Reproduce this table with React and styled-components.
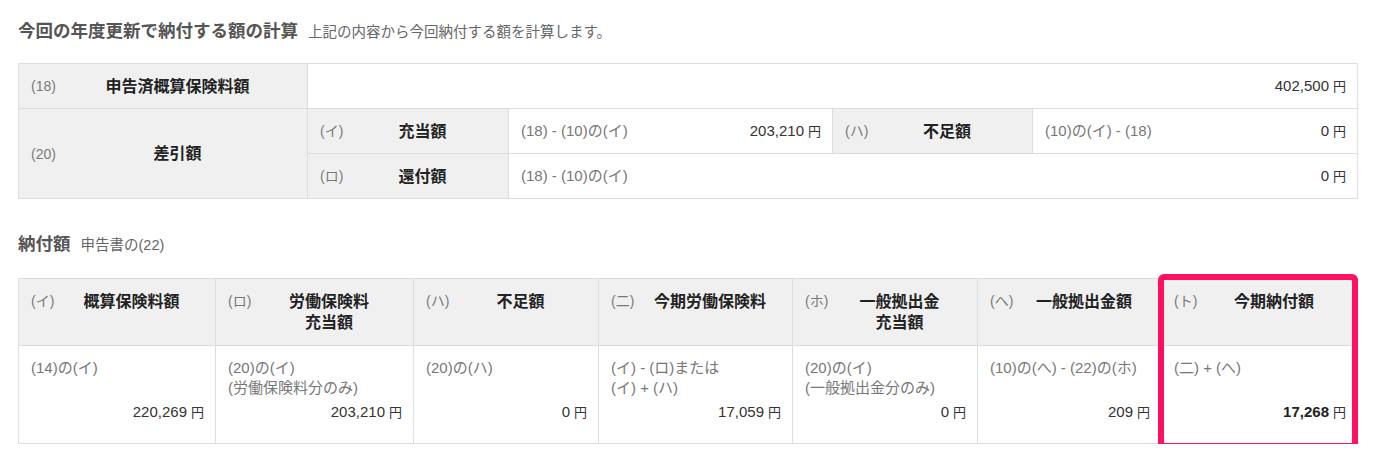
import React from "react";
import styled, { createGlobalStyle } from "styled-components";

const GlobalStyle = createGlobalStyle`
  body {
    margin: 0;
    background: #fff;
    font-family: "Liberation Sans", "Noto Sans CJK JP", sans-serif;
    color: #333;
  }
`;

const Page = styled.div`
  padding: 17px 17px 0 18px;
`;

const Heading = styled.div`
  display: flex;
  align-items: baseline;
  gap: 10px;
  height: 26px;
  margin-bottom: ${(p) => p.$gap}px;
`;

const HeadingMain = styled.span`
  font-size: 17.5px;
  font-weight: bold;
  color: #555;
`;

const HeadingSub = styled.span`
  font-size: 14.5px;
  color: #666;
`;

const Table = styled.table`
  width: 1339px;
  border-collapse: collapse;
  table-layout: fixed;
  font-size: 14px;
  line-height: 20px;
`;

const Cell = styled.td`
  border: 1px solid #ddd;
  padding: 12px 11px 12px 12px;
  background: ${(p) => (p.$head ? "#f0f0f0" : "#fff")};
  vertical-align: ${(p) => (p.$top ? "top" : "middle")};
`;

const LabelBox = styled.div`
  display: flex;
  align-items: ${(p) => (p.$top ? "flex-start" : "center")};
  height: ${(p) => (p.$top ? "42px" : "20px")};
`;

const Num = styled.span`
  flex: 0 0 28px;
  color: #7a7a7a;
  line-height: 20px;
`;

const Label = styled.span`
  flex: 1;
  text-align: center;
  font-weight: bold;
  font-size: 16px;
  color: #222;
  line-height: 21px;
`;

const ValueRow = styled.div`
  display: flex;
  justify-content: space-between;
  align-items: center;
  height: 20px;
`;

const Formula = styled.span`
  color: #777;
  font-size: 15px;
`;

const Amount = styled.span`
  color: ${(p) => (p.$strong ? "#222" : "#333")};
  font-weight: ${(p) => (p.$strong ? "bold" : "normal")};
  font-size: 15px;
  white-space: nowrap;
`;

const Yen = styled.span`
  font-weight: normal;
  margin-left: 4px;
  font-size: 13px;
  color: #333;
`;

const Wrap = styled.div`
  position: relative;
  width: 1339px;
`;

const Highlight = styled.div`
  position: absolute;
  top: -4px;
  bottom: -5px;
  right: -1px;
  width: 200px;
  border: 6px solid #ff1060;
  border-radius: 6px;
  box-sizing: border-box;
  pointer-events: none;
`;

const BodyCell = styled(Cell)`
  padding-bottom: 21px;
`;

const FormulaBlock = styled.div`
  height: 44px;
  color: #777;
  font-size: 15px;
`;

const AmountLine = styled.div`
  text-align: right;
  height: 20px;
  line-height: 20px;
`;

const Money = ({ v, strong }) => (
  <Amount $strong={strong}>
    {v}
    <Yen>円</Yen>
  </Amount>
);

const HeadLabel = ({ n, children, top }) => (
  <LabelBox $top={top}>
    <Num>{n}</Num>
    <Label>{children}</Label>
  </LabelBox>
);

const columns = [
  { w: 197, n: "(イ)", label: ["概算保険料額"], f: ["(14)の(イ)"], v: "220,269" },
  { w: 198, n: "(ロ)", label: ["労働保険料", "充当額"], f: ["(20)の(イ)", "(労働保険料分のみ)"], v: "203,210" },
  { w: 185, n: "(ハ)", label: ["不足額"], f: ["(20)の(ハ)"], v: "0" },
  { w: 194, n: "(二)", label: ["今期労働保険料"], f: ["(イ) - (ロ)または", "(イ) + (ハ)"], v: "17,059" },
  { w: 185, n: "(ホ)", label: ["一般拠出金", "充当額"], f: ["(20)の(イ)", "(一般拠出金分のみ)"], v: "0" },
  { w: 184, n: "(へ)", label: ["一般拠出金額"], f: ["(10)の(へ) - (22)の(ホ)"], v: "209" },
  { w: 196, n: "(ト)", label: ["今期納付額"], f: ["(二) + (へ)"], v: "17,268", strong: true },
];

export default function App() {
  return (
    <Page>
      <GlobalStyle />
      <Heading $gap={20}>
        <HeadingMain>今回の年度更新で納付する額の計算</HeadingMain>
        <HeadingSub>上記の内容から今回納付する額を計算します。</HeadingSub>
      </Heading>

      <Table>
        <colgroup>
          <col style={{ width: 289 }} />
          <col style={{ width: 201 }} />
          <col style={{ width: 324 }} />
          <col style={{ width: 200 }} />
          <col style={{ width: 325 }} />
        </colgroup>
        <tbody>
          <tr>
            <Cell $head>
              <HeadLabel n="(18)">申告済概算保険料額</HeadLabel>
            </Cell>
            <Cell colSpan={4}>
              <AmountLine>
                <Money v="402,500" />
              </AmountLine>
            </Cell>
          </tr>
          <tr>
            <Cell $head rowSpan={2}>
              <HeadLabel n="(20)">差引額</HeadLabel>
            </Cell>
            <Cell $head>
              <HeadLabel n="(イ)">充当額</HeadLabel>
            </Cell>
            <Cell>
              <ValueRow>
                <Formula>(18) - (10)の(イ)</Formula>
                <Money v="203,210" />
              </ValueRow>
            </Cell>
            <Cell $head>
              <HeadLabel n="(ハ)">不足額</HeadLabel>
            </Cell>
            <Cell>
              <ValueRow>
                <Formula>(10)の(イ) - (18)</Formula>
                <Money v="0" />
              </ValueRow>
            </Cell>
          </tr>
          <tr>
            <Cell $head>
              <HeadLabel n="(ロ)">還付額</HeadLabel>
            </Cell>
            <Cell colSpan={3}>
              <ValueRow>
                <Formula>(18) - (10)の(イ)</Formula>
                <Money v="0" />
              </ValueRow>
            </Cell>
          </tr>
        </tbody>
      </Table>

      <Heading $gap={22} style={{ marginTop: 31 }}>
        <HeadingMain>納付額</HeadingMain>
        <HeadingSub>申告書の(22)</HeadingSub>
      </Heading>

      <Wrap>
        <Table>
          <colgroup>
            {columns.map((c) => (
              <col key={c.n} style={{ width: c.w }} />
            ))}
          </colgroup>
          <tbody>
            <tr>
              {columns.map((c) => (
                <Cell $head $top key={c.n}>
                  <HeadLabel n={c.n} top>
                    {c.label.map((l, i) => (
                      <React.Fragment key={l}>
                        {i > 0 && <br />}
                        {l}
                      </React.Fragment>
                    ))}
                  </HeadLabel>
                </Cell>
              ))}
            </tr>
            <tr>
              {columns.map((c) => (
                <BodyCell $top key={c.n}>
                  <FormulaBlock>
                    {c.f.map((l) => (
                      <div key={l}>{l}</div>
                    ))}
                  </FormulaBlock>
                  <AmountLine>
                    <Money v={c.v} strong={c.strong} />
                  </AmountLine>
                </BodyCell>
              ))}
            </tr>
          </tbody>
        </Table>
        <Highlight />
      </Wrap>
    </Page>
  );
}
